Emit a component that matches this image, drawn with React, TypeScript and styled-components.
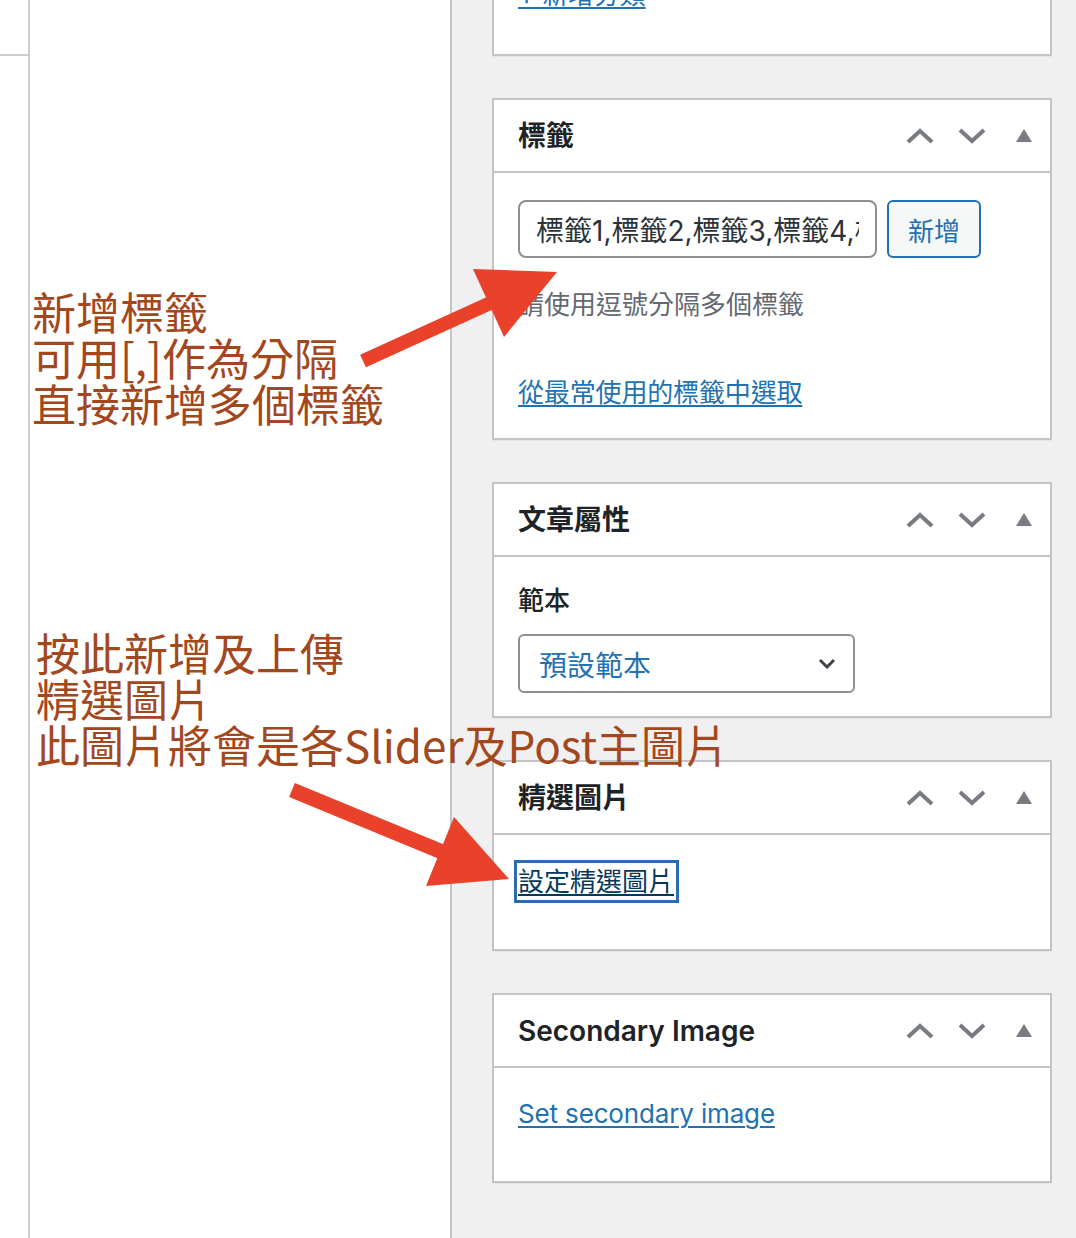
import React from "react";
import styled, { createGlobalStyle } from "styled-components";

const GlobalStyle = createGlobalStyle`
  html, body {
    margin: 0;
    padding: 0;
    height: 100%;
    overflow: hidden;
    background: #fff;
  }
  body {
    font-family: "Inter", "Noto Sans CJK TC", sans-serif;
    -webkit-font-smoothing: antialiased;
  }
  * { box-sizing: border-box; }
`;

const Page = styled.div`
  position: relative;
  display: flex;
  width: 1076px;
  height: 1238px;
  overflow: hidden;
  background: #fff;
`;

const Rail = styled.div`
  flex: none;
  width: 30px;
  border-right: 2px solid #cdcdcd;
  background: #fff;
`;

const RailTop = styled.div`
  height: 56px;
  border-bottom: 2px solid #cdcdcd;
`;

const Main = styled.main`
  flex: none;
  width: 422px;
  border-right: 2px solid #c3c4c7;
  background: #fff;
`;

const Sidebar = styled.aside`
  flex: 1;
  display: flex;
  flex-direction: column;
  gap: 42px;
  padding: 0 24px 0 40px;
  background: #f0f0f1;
`;

const Panel = styled.section<{ $shift?: number }>`
  flex: none;
  background: #fff;
  border: 2px solid #c3c4c7;
  box-shadow: 0 1px 1px rgba(0, 0, 0, 0.04);
  margin-top: ${(p) => p.$shift ?? 0}px;
`;

const Header = styled.div`
  display: flex;
  align-items: center;
  height: 73px;
  padding-left: 24px;
  border-bottom: 2px solid #c3c4c7;
`;

const Title = styled.h2`
  flex: 1;
  margin: 0;
  padding-top: 1px;
  font-size: 28px;
  font-weight: 600;
  line-height: 36px;
  color: #1d2327;
`;

const IconButton = styled.button`
  flex: none;
  display: flex;
  align-items: center;
  justify-content: center;
  width: 52px;
  height: 71px;
  padding: 0;
  border: 0;
  background: none;
  color: #787c82;
`;

const Body = styled.div<{ $top: number; $bottom: number }>`
  padding: ${(p) => p.$top}px 24px ${(p) => p.$bottom}px;
`;

const TagRow = styled.div`
  display: flex;
  gap: 10px;
`;

const TagInput = styled.input`
  width: 359px;
  height: 58px;
  padding: 0 16px;
  border: 2px solid #8c8f94;
  border-radius: 8px;
  font: inherit;
  font-size: 28px;
  color: #2c3338;
  background: #fff;
  outline: none;
`;

const AddButton = styled.button`
  width: 94px;
  height: 58px;
  padding: 0;
  border: 2px solid #2271b1;
  border-radius: 6px;
  background: #f6f7f7;
  font: inherit;
  font-size: 26px;
  color: #2271b1;
`;

const Help = styled.p`
  margin: 29px 0 0;
  font-size: 26px;
  line-height: 36px;
  color: #646970;
`;

const Link = styled.a<{ $gap?: number }>`
  display: inline-block;
  margin-top: ${(p) => p.$gap ?? 0}px;
  font-size: 26px;
  line-height: 36px;
  letter-spacing: -0.15px;
  color: #2271b1;
  text-decoration: underline;
  text-decoration-thickness: 2px;
  text-underline-offset: 3px;
`;

const FocusLink = styled.a`
  display: inline-block;
  margin-left: -1px;
  padding: 1px 2px 0 1px;
  font-size: 26px;
  line-height: 36px;
  color: #043959;
  text-decoration: underline;
  text-decoration-thickness: 2px;
  text-underline-offset: 3px;
  box-shadow: 0 0 0 3px #2b6cb0;
`;

const FieldLabel = styled.div`
  font-size: 26px;
  font-weight: 500;
  line-height: 36px;
  color: #1d2327;
`;

const SelectBox = styled.div`
  display: flex;
  align-items: center;
  justify-content: space-between;
  width: 337px;
  height: 59px;
  margin-top: 15px;
  padding: 0 17px 0 19px;
  border: 2px solid #8c8f94;
  border-radius: 6px;
  font-size: 28px;
  color: #2271b1;
  background: #fff;
`;

const Note = styled.div<{ $x: number; $y: number }>`
  position: absolute;
  left: ${(p) => p.$x}px;
  top: ${(p) => p.$y}px;
  font-family: "Noto Sans CJK TC", sans-serif;
  font-size: 44px;
  color: #a3471d;
  white-space: nowrap;
`;

const NoteLine = styled.div`
  height: 46px;
  line-height: 46px;
`;

const Overlay = styled.svg`
  position: absolute;
  left: 0;
  top: 0;
  pointer-events: none;
`;

const ChevronUp = () => (
  <svg width="28" height="16" viewBox="0 0 28 16">
    <polyline points="2,14 14,3 26,14" fill="none" stroke="currentColor" strokeWidth="4" />
  </svg>
);

const ChevronDown = () => (
  <svg width="28" height="16" viewBox="0 0 28 16">
    <polyline points="2,2 14,13 26,2" fill="none" stroke="currentColor" strokeWidth="4" />
  </svg>
);

const Triangle = () => (
  <svg width="16" height="13" viewBox="0 0 16 13">
    <polygon points="0,13 8,0 16,13" fill="currentColor" />
  </svg>
);

const PanelHeader = ({ title }: { title: string }) => (
  <Header>
    <Title>{title}</Title>
    <IconButton aria-label="上移">
      <ChevronUp />
    </IconButton>
    <IconButton aria-label="下移">
      <ChevronDown />
    </IconButton>
    <IconButton aria-label="切換">
      <Triangle />
    </IconButton>
  </Header>
);

export default function App() {
  return (
    <>
      <GlobalStyle />
      <Page>
        <Rail>
          <RailTop />
        </Rail>
        <Main />
        <Sidebar>
          <Panel $shift={-40}>
            <Body $top={15} $bottom={41}>
              <Link href="#">+ 新增分類</Link>
            </Body>
          </Panel>

          <Panel>
            <PanelHeader title="標籤" />
            <Body $top={27} $bottom={27}>
              <TagRow>
                <TagInput readOnly value="標籤1,標籤2,標籤3,標籤4,標籤5" />
                <AddButton>新增</AddButton>
              </TagRow>
              <Help>請使用逗號分隔多個標籤</Help>
              <Link href="#" $gap={52}>
                從最常使用的標籤中選取
              </Link>
            </Body>
          </Panel>

          <Panel>
            <PanelHeader title="文章屬性" />
            <Body $top={26} $bottom={23}>
              <FieldLabel>範本</FieldLabel>
              <SelectBox>
                <span>預設範本</span>
                <svg width="18" height="11" viewBox="0 0 18 11">
                  <polyline points="2,2 9,9 16,2" fill="none" stroke="#3c434a" strokeWidth="3" />
                </svg>
              </SelectBox>
            </Body>
          </Panel>

          <Panel>
            <PanelHeader title="精選圖片" />
            <Body $top={28} $bottom={49}>
              <FocusLink href="#">設定精選圖片</FocusLink>
            </Body>
          </Panel>

          <Panel>
            <PanelHeader title="Secondary Image" />
            <Body $top={28} $bottom={49}>
              <Link href="#">Set secondary image</Link>
            </Body>
          </Panel>
        </Sidebar>

        <Note $x={32} $y={288}>
          <NoteLine>新增標籤</NoteLine>
          <NoteLine>可用[,]作為分隔</NoteLine>
          <NoteLine>直接新增多個標籤</NoteLine>
        </Note>
        <Note $x={36} $y={629}>
          <NoteLine>按此新增及上傳</NoteLine>
          <NoteLine>精選圖片</NoteLine>
          <NoteLine>此圖片將會是各Slider及Post主圖片</NoteLine>
        </Note>

        <Overlay width="1076" height="1238" viewBox="0 0 1076 1238">
          <line x1="363" y1="361" x2="497" y2="300" stroke="#e9412a" strokeWidth="14" />
          <polygon points="473,269 557,272 504,337" fill="#e9412a" />
          <line x1="292" y1="790" x2="452" y2="856" stroke="#e9412a" strokeWidth="15" />
          <polygon points="454,817 509,879 426,886" fill="#e9412a" />
        </Overlay>
      </Page>
    </>
  );
}
